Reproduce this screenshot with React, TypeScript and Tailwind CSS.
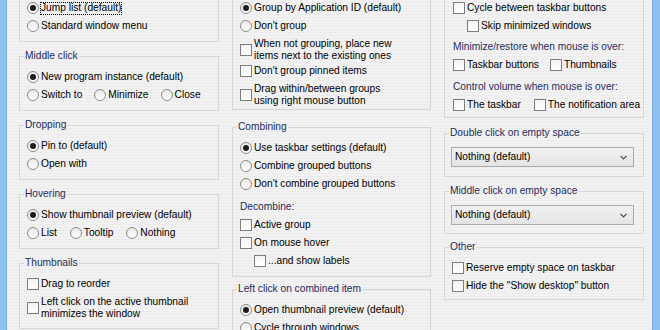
import React from 'react';

const Radio: React.FC<{ checked?: boolean }> = ({ checked }) => (
  <span className="w-[12px] h-[12px] rounded-full border border-[#8c8c8c] bg-linear-to-b from-[#e9e9e9] to-white flex items-center justify-center shrink-0">
    {checked && <span className="w-[6px] h-[6px] rounded-full bg-[#1c1c1c]" />}
  </span>
);

const Check: React.FC = () => (
  <span className="w-[12px] h-[12px] border border-[#7d7d7d] bg-linear-to-b from-[#f4f4f4] to-white shrink-0" />
);

const RadioRow: React.FC<{ label: string; checked?: boolean; focus?: boolean }> = ({ label, checked, focus }) => (
  <div className="flex items-center h-[18px] gap-[2px]">
    <Radio checked={checked} />
    {focus ? (
      <span className="-ml-px border border-dotted border-black leading-[10px] pb-px">{label}</span>
    ) : (
      <span>{label}</span>
    )}
  </div>
);

const CheckRow: React.FC<{ label: string; indent?: boolean }> = ({ label, indent }) => (
  <div className={indent ? 'flex items-center h-[18px] gap-[2px] ml-[14px]' : 'flex items-center h-[18px] gap-[2px]'}>
    <Check />
    <span>{label}</span>
  </div>
);

const CheckRow2: React.FC<{ a: string; b: string }> = ({ a, b }) => (
  <div className="flex items-center pt-[3px] gap-[2px]">
    <Check />
    <span className="leading-[12px]">
      {a}
      <br />
      {b}
    </span>
  </div>
);

const Label: React.FC<{ text: string; className?: string }> = ({ text, className }) => (
  <div className={`flex items-center h-[18px] text-[#1f2d5c] ${className ?? ''}`}>{text}</div>
);

const Group: React.FC<{ title: string; className?: string; children: React.ReactNode }> = ({ title, className, children }) => (
  <fieldset className={`min-w-0 border border-[#d6d6d6] pl-[7px] pr-[8px] pt-[5px] ${className ?? ''}`}>
    <legend className="-ml-[3px] px-[1px] leading-[14px] text-[#1f2d5c]">{title}</legend>
    {children}
  </fieldset>
);

const Select: React.FC = () => (
  <div className="-ml-px h-[20px] border border-[#acacac] bg-linear-to-b from-[#f2f2f2] to-[#e4e4e4] flex items-center justify-between pl-[3px] pr-[6px]">
    <span>Nothing (default)</span>
    <svg width="7" height="5" viewBox="0 0 7 5">
      <polyline points="0.5,0.8 3.5,3.8 6.5,0.8" fill="none" stroke="#4a4a4a" strokeWidth="1.2" />
    </svg>
  </div>
);

export default function App() {
  return (
    <div className="w-[660px] h-[330px] overflow-hidden flex font-['Liberation_Sans',Arial,sans-serif] text-[10.2px] text-black bg-[repeating-linear-gradient(180deg,#f2f2f2_0px,#f2f2f2_2px,#ececec_2px,#ececec_3px)]">
      <div className="w-[7px] shrink-0 bg-[#8fc1f0] border-r border-[#79aee2]" />

      <div className="flex pl-[12px] gap-[13px]">
        {/* column 1 */}
        <div className="w-[200px] flex flex-col">
          <div className="-mt-px border-x border-b border-[#d6d6d6] pl-[7px] pb-[6px]">
            <RadioRow label="Jump list (default)" checked focus />
            <RadioRow label="Standard window menu" />
          </div>
          <Group title="Middle click" className="mt-[7px] pb-[6px]">
            <RadioRow label="New program instance (default)" checked />
            <div className="flex gap-[12px]">
              <RadioRow label="Switch to" />
              <RadioRow label="Minimize" />
              <RadioRow label="Close" />
            </div>
          </Group>
          <Group title="Dropping" className="mt-[7px] pb-[6px]">
            <RadioRow label="Pin to (default)" checked />
            <RadioRow label="Open with" />
          </Group>
          <Group title="Hovering" className="mt-[7px] pb-[6px]">
            <RadioRow label="Show thumbnail preview (default)" checked />
            <div className="flex gap-[13px]">
              <RadioRow label="List" />
              <RadioRow label="Tooltip" />
              <RadioRow label="Nothing" />
            </div>
          </Group>
          <Group title="Thumbnails" className="mt-[7px] pb-[8px]">
            <CheckRow label="Drag to reorder" />
            <CheckRow2 a="Left click on the active thumbnail" b="minimizes the window" />
          </Group>
        </div>

        {/* column 2 */}
        <div className="w-[199px] flex flex-col">
          <div className="-mt-px border-x border-b border-[#d6d6d6] pl-[7px] pb-[2px]">
            <RadioRow label="Group by Application ID (default)" checked />
            <RadioRow label="Don't group" />
            <CheckRow2 a="When not grouping, place new" b="items next to the existing ones" />
            <CheckRow label="Don't group pinned items" />
            <CheckRow2 a="Drag within/between groups" b="using right mouse button" />
          </div>
          <Group title="Combining" className="mt-[10px] pb-[6px]">
            <RadioRow label="Use taskbar settings (default)" checked />
            <RadioRow label="Combine grouped buttons" />
            <RadioRow label="Don't combine grouped buttons" />
            <Label text="Decombine:" className="mt-[5px]" />
            <CheckRow label="Active group" />
            <CheckRow label="On mouse hover" />
            <CheckRow label="...and show labels" indent />
          </Group>
          <Group title="Left click on combined item" className="mt-[5px] pb-[6px]">
            <RadioRow label="Open thumbnail preview (default)" checked />
            <RadioRow label="Cycle through windows" />
          </Group>
        </div>

        {/* column 3 */}
        <div className="w-[200px] flex flex-col">
          <div className="-mt-px border-x border-b border-[#d6d6d6] pl-[8px] pb-[3px]">
            <CheckRow label="Cycle between taskbar buttons" />
            <CheckRow label="Skip minimized windows" indent />
            <Label text="Minimize/restore when mouse is over:" className="mt-[3px]" />
            <div className="flex gap-[11px]">
              <CheckRow label="Taskbar buttons" />
              <CheckRow label="Thumbnails" />
            </div>
            <Label text="Control volume when mouse is over:" className="mt-[4px]" />
            <div className="flex gap-[13px]">
              <CheckRow label="The taskbar" />
              <CheckRow label="The notification area" />
            </div>
          </div>
          <Group title="Double click on empty space" className="mt-[8px] pt-[7px] pb-[9px] pr-[9px]">
            <Select />
          </Group>
          <Group title="Middle click on empty space" className="mt-[7px] pt-[7px] pb-[8px] pr-[9px]">
            <Select />
          </Group>
          <Group title="Other" className="mt-[6px] pb-[4px]">
            <CheckRow label="Reserve empty space on taskbar" />
            <CheckRow label='Hide the "Show desktop" button' />
          </Group>
        </div>
      </div>

      <div className="flex-1" />
      <div className="w-[8px] shrink-0 bg-[#8fc1f0] border-l border-[#79aee2]" />
    </div>
  );
}
